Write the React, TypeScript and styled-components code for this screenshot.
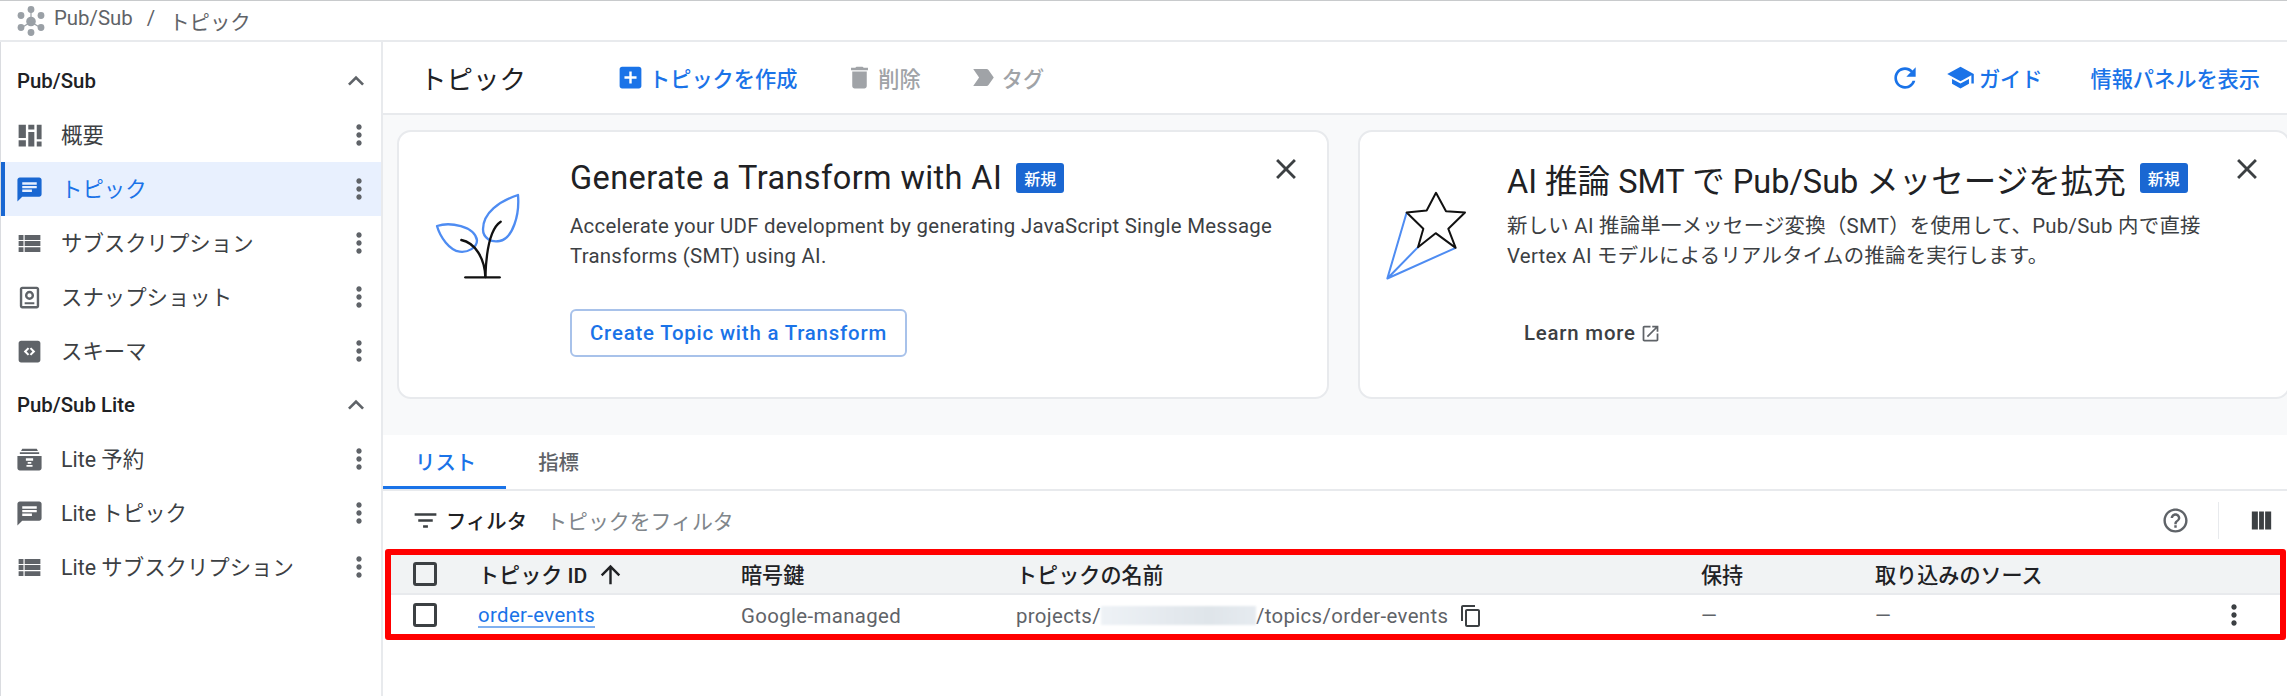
import React from 'react';
import styled, { createGlobalStyle } from 'styled-components';

const GlobalStyle = createGlobalStyle`
    html, body {
        margin: 0;
        padding: 0;
        background: #fff;
        overflow: hidden;
    }
    body, button {
        font-family: Roboto, "Noto Sans CJK JP", sans-serif;
    }
`;

const ICONS: Record<string, string> = {
    chat: 'M20 2H4c-1.1 0-1.99.9-1.99 2L2 22l4-4h14c1.1 0 2-.9 2-2V4c0-1.1-.9-2-2-2zM6 9h12v2H6V9zm8 5H6v-2h8v2zm4-6H6V6h12v2z',
    list: 'M3 14h4v-4H3v4zm0 5h4v-4H3v4zM3 9h4V5H3v4zm5 5h13v-4H8v4zm0 5h13v-4H8v4zM8 5v4h13V5H8z',
    filter: 'M10 18h4v-2h-4v2zM3 6v2h18V6H3zm3 7h12v-2H6v2z',
    addBox: 'M19 3H5c-1.11 0-2 .9-2 2v14c0 1.1.89 2 2 2h14c1.1 0 2-.9 2-2V5c0-1.1-.9-2-2-2zm-2 10h-4v4h-2v-4H7v-2h4V7h2v4h4v2z',
    trash: 'M6 19c0 1.1.9 2 2 2h8c1.1 0 2-.9 2-2V7H6v12zM19 4h-3.5l-1-1h-5l-1 1H5v2h14V4z',
    label: 'M3.5 18.99l11 .01c.67 0 1.27-.33 1.63-.84L20.5 12l-4.37-6.16c-.36-.51-.96-.84-1.63-.84l-11 .01L8.34 12 3.5 18.99z',
    refresh: 'M17.65 6.35C16.2 4.9 14.21 4 12 4c-4.42 0-7.99 3.58-7.99 8s3.57 8 7.99 8c3.73 0 6.84-2.55 7.73-6h-2.08c-.82 2.33-3.04 4-5.65 4-3.31 0-6-2.69-6-6s2.69-6 6-6c1.66 0 3.14.69 4.22 1.78L13 11h7V4l-2.35 2.35z',
    school: 'M5 13.18v4L12 21l7-3.82v-4L12 17l-7-3.82zM12 3L1 9l11 6 9-4.91V17h2V9L12 3z',
    close: 'M19 6.41L17.59 5 12 10.59 6.41 5 5 6.41 10.59 12 5 17.59 6.41 19 12 13.41 17.59 19 19 17.59 13.41 12z',
    more: 'M12 8c1.1 0 2-.9 2-2s-.9-2-2-2-2 .9-2 2 .9 2 2 2zm0 2c-1.1 0-2 .9-2 2s.9 2 2 2 2-.9 2-2-.9-2-2-2zm0 6c-1.1 0-2 .9-2 2s.9 2 2 2 2-.9 2-2-.9-2-2-2z',
    expand: 'M12 8l-6 6 1.41 1.41L12 10.83l4.59 4.58L18 14z',
    help: 'M11 18h2v-2h-2v2zm1-16C6.48 2 2 6.48 2 12s4.48 10 10 10 10-4.48 10-10S17.52 2 12 2zm0 18c-4.41 0-8-3.59-8-8s3.59-8 8-8 8 3.59 8 8-3.59 8-8 8zm0-14c-2.21 0-4 1.79-4 4h2c0-1.1.9-2 2-2s2 .9 2 2c0 2-3 1.75-3 5h2c0-2.25 3-2.5 3-5 0-2.21-1.79-4-4-4z',
    columns: 'M10 19.500h4v-15h-4v15zm-6 0h5v-15H4v15zm11-15v15h5v-15h-5z',
    up: 'M4 12l1.41 1.41L11 7.83V20h2V7.83l5.58 5.59L20 12l-8-8-8 8z',
    copy: 'M16 1H4c-1.1 0-2 .9-2 2v14h2V3h12V1zm3 4H8c-1.1 0-2 .9-2 2v14c0 1.1.9 2 2 2h11c1.1 0 2-.9 2-2V7c0-1.1-.9-2-2-2zm0 16H8V7h11v14z',
    external: 'M19 19H5V5h7V3H5c-1.11 0-2 .9-2 2v14c0 1.1.89 2 2 2h14c1.1 0 2-.9 2-2v-7h-2v7zM14 3v2h3.59l-9.83 9.83 1.41 1.41L19 6.41V10h2V3h-7z',
    overview: 'M3 3h6v11H3V3zm0 13h6v5H3v-5zm8-13h5v4h-5V3zm0 6h5v12h-5V9zm7-6h4v12h-4V3zm0 14h4v4h-4v-4z',
    snapshot: 'M6 3h12c1.1 0 2 .9 2 2v14c0 1.1-.9 2-2 2H6c-1.1 0-2-.9-2-2V5c0-1.1.9-2 2-2zm0 2v14h12V5H6zm2 11h8v1.5H8V16zm4-9.500a3.75 3.75 0 1 1 0 7.5 3.75 3.75 0 0 1 0-7.5zm0 2a1.75 1.75 0 1 0 0 3.5 1.75 1.75 0 0 0 0-3.5z',
    schema: 'M5 3h14c1.1 0 2 .9 2 2v14c0 1.1-.9 2-2 2H5c-1.1 0-2-.9-2-2V5c0-1.1.9-2 2-2zm5.6 5.6L7.2 12l3.4 3.4 1.2-1.2L9.6 12l2.2-2.2-1.2-1.2zm2.8 0l-1.2 1.2 2.2 2.2-2.2 2.2 1.2 1.2 3.4-3.4-3.4-3.4z',
    reservation: 'M6 3h12l1 2H5l1-2zM4 6h16v1.5H4V6zM2 9h20v10c0 1.1-.9 2-2 2H4c-1.1 0-2-.9-2-2V9zm7 2v2h6v-2H9zm1.500 3v1.5h3V14h-3zm-1 2.500V18h5v-1.500h-5z',
};

const Svg = styled.svg<{ $size: number; $color?: string }>`
    display: block;
    flex: none;
    width: ${p => p.$size}px;
    height: ${p => p.$size}px;
    fill: ${p => p.$color || '#5f6368'};
`;

const Icon: React.FC<{ name: string; size: number; color?: string }> = ({ name, size, color }) => (
    <Svg viewBox="0 0 24 24" $size={size} $color={color}>
        <path d={ICONS[name]} />
    </Svg>
);

const Page = styled.div`
    width: 2287px;
    height: 696px;
    display: flex;
    flex-direction: column;
    overflow: hidden;
    font-size: 20.4px;
    color: #3c4043;
`;

const TopBar = styled.div`
    height: 39px;
    flex: none;
    display: flex;
    align-items: center;
    gap: 9px;
    padding: 0 0 0 17px;
    border-top: 1px solid #c8cacc;
    border-bottom: 2px solid #e8eaed;
    color: #5f6368;
    font-size: 20.4px;
`;

const Crumbs = styled.div`
    display: flex;
    gap: 14px;
`;

const Body = styled.div`
    flex: 1;
    min-height: 0;
    display: flex;
`;

const Sidebar = styled.nav`
    width: 380px;
    flex: none;
    padding-top: 12px;
    border-left: 1px solid #dadce0;
    border-right: 2px solid #e8eaed;
`;

const SectionHead = styled.div`
    height: 54px;
    display: flex;
    align-items: center;
    justify-content: space-between;
    padding: 0 9px 0 16px;
    font-weight: 500;
    color: #202124;
`;

const NavRow = styled.div<{ $active?: boolean }>`
    height: 54px;
    display: flex;
    align-items: center;
    gap: 17px;
    padding: 0 6px 0 14px;
    font-size: 21.4px;
    color: ${p => (p.$active ? '#1a73e8' : '#3c4043')};
    background: ${p => (p.$active ? '#e8f0fe' : 'transparent')};
    box-shadow: ${p => (p.$active ? 'inset 4px 0 0 #1967d2' : 'none')};
`;

const NavLabel = styled.span`
    flex: 1;
    padding-bottom: 3px;
`;

const Main = styled.main`
    flex: 1;
    min-width: 0;
    display: flex;
    flex-direction: column;
`;

const PageHeader = styled.header`
    height: 71px;
    flex: none;
    display: flex;
    align-items: center;
    padding: 0 27px 0 37px;
    border-bottom: 2px solid #e8eaed;
`;

const PageTitle = styled.h1`
    margin: 0 90px 0 0;
    font-size: 26.5px;
    font-weight: 400;
    color: #202124;
`;

const ActionGroup = styled.div`
    display: flex;
    align-items: center;
    gap: 48px;
`;

const RightActions = styled(ActionGroup)`
    margin-left: auto;
`;

const RefreshSlot = styled.span`
    margin-right: -23px;
`;

const Action = styled.span<{ $disabled?: boolean }>`
    display: flex;
    align-items: center;
    gap: 4px;
    font-size: 21.2px;
    font-weight: 500;
    color: ${p => (p.$disabled ? '#a0a3a7' : '#1a73e8')};
`;

const Banners = styled.section`
    height: 320px;
    flex: none;
    box-sizing: border-box;
    padding: 15px 0 0 14px;
    display: grid;
    grid-template-columns: 932px 932px;
    column-gap: 29px;
    align-items: start;
    background: #f8f9fa;
`;

const Card = styled.article<{ $iconWidth: number }>`
    position: relative;
    height: 269px;
    box-sizing: border-box;
    display: grid;
    grid-template-columns: ${p => p.$iconWidth}px 1fr;
    border: 2px solid #e8eaed;
    border-radius: 14px;
    background: #fff;
`;

const Art = styled.div<{ $left: number; $top: number }>`
    padding: ${p => p.$top}px 0 0 ${p => p.$left}px;
`;

const CardBody = styled.div`
    padding-top: 28px;
`;

const CardTitle = styled.div<{ $tracking?: number }>`
    display: flex;
    align-items: center;
    gap: 14px;
    height: 36px;
    font-size: 32.5px;
    letter-spacing: ${p => p.$tracking || 0}px;
    color: #202124;
`;

const NewBadge = styled.span`
    width: 48px;
    height: 30px;
    display: flex;
    align-items: center;
    justify-content: center;
    border-radius: 3px;
    background: #1a67d2;
    color: #fff;
    font-size: 16px;
    font-weight: 500;
    letter-spacing: 0;
`;

const CardText = styled.p`
    margin: 15px 0 0;
    font-size: 20.4px;
    letter-spacing: 0.27px;
    line-height: 30px;
    color: #3c4043;
`;

const CloseButton = styled.span`
    position: absolute;
    top: 20px;
    right: 24px;
`;

const OutlineButton = styled.span`
    display: inline-flex;
    align-items: center;
    box-sizing: border-box;
    height: 48px;
    margin-top: 38px;
    padding: 0 18px;
    border: 2px solid #a8c2ea;
    border-radius: 6px;
    color: #1a73e8;
    font-weight: 500;
    letter-spacing: 0.8px;
`;

const LearnMore = styled.span`
    display: inline-flex;
    align-items: center;
    gap: 4px;
    height: 48px;
    margin-top: 38px;
    padding-left: 17px;
    font-weight: 500;
    letter-spacing: 0.8px;
    color: #3c4043;
`;

const Tabs = styled.div`
    height: 56px;
    flex: none;
    box-sizing: border-box;
    display: flex;
    border-bottom: 2px solid #e8eaed;
`;

const Tab = styled.div<{ $active?: boolean }>`
    height: 54px;
    box-sizing: border-box;
    display: flex;
    align-items: center;
    padding: 0 30px 0 32px;
    font-weight: 500;
    color: ${p => (p.$active ? '#1a73e8' : '#5f6368')};
    border-bottom: 3px solid ${p => (p.$active ? '#1a73e8' : 'transparent')};
`;

const FilterBar = styled.div`
    height: 58px;
    flex: none;
    display: flex;
    align-items: center;
    padding: 0 11px 0 28px;
`;

const FilterLabel = styled.span`
    margin: 0 19px 0 6px;
    font-weight: 500;
    color: #202124;
`;

const FilterHint = styled.span`
    font-size: 20.9px;
    color: #80868b;
`;

const FilterTools = styled.div`
    margin-left: auto;
    display: flex;
    align-items: center;
`;

const ToolDivider = styled.span`
    width: 1px;
    height: 37px;
    margin: 0 28px;
    background: #e8eaed;
`;

const Highlight = styled.div`
    margin-left: 2px;
    width: 1901px;
    box-sizing: border-box;
    border: 6px solid #ff0000;
    border-radius: 3px;
`;

const Row = styled.div<{ $head?: boolean }>`
    display: grid;
    grid-template-columns: 87px 263px 275px 685px 174px 1fr 62px;
    align-items: center;
    height: ${p => (p.$head ? '40px' : '39px')};
    box-sizing: border-box;
    font-size: ${p => (p.$head ? '21.1px' : '20.4px')};
    letter-spacing: ${p => (p.$head ? '0' : '0.35px')};
    color: ${p => (p.$head ? '#202124' : '#5f6368')};
    font-weight: ${p => (p.$head ? 500 : 400)};
    background: ${p => (p.$head ? '#f1f3f4' : '#fff')};
    border-bottom: ${p => (p.$head ? '2px solid #e8eaed' : 'none')};
`;

const Cell = styled.div`
    display: flex;
    align-items: center;
    white-space: nowrap;
`;

const DataCell = styled(Cell)`
    padding-top: 2px;
`;

const CheckCell = styled(Cell)`
    padding-left: 22px;
`;

const SortArrow = styled.span`
    margin-left: 9px;
`;

const Checkbox = styled.span`
    display: block;
    width: 24px;
    height: 24px;
    box-sizing: border-box;
    border: 3px solid #3c4043;
    border-radius: 3px;
`;

const TopicLink = styled.a`
    color: #1a73e8;
    border-bottom: 2px solid #7fb0f0;
    line-height: 22px;
`;

const Redacted = styled.span`
    display: inline-block;
    width: 155px;
    height: 19px;
    background: linear-gradient(90deg, #eef2f6, #e4e9ee 45%, #dfe5ea 70%, #e6ebf0);
    filter: blur(1px);
`;

const CopyWrap = styled.span`
    margin-left: 11px;
`;

const Plant = () => (
    <svg width="90" height="90" viewBox="100 120 270 270" fill="none" strokeLinecap="round" strokeLinejoin="round">
        <g stroke="#4e8cf2" strokeWidth="7">
            <path d="M112 225C150 212 225 225 232 268C232 290 205 305 180 302C150 298 122 260 112 225Z" />
            <path d="M355 132C300 150 250 185 250 235C250 262 275 275 300 270C340 262 360 190 355 132Z" />
        </g>
        <g stroke="#111" strokeWidth="7">
            <path d="M185 267C225 275 255 320 257 378" />
            <path d="M303 212C275 230 260 290 257 378" />
            <path d="M197 379H300" />
        </g>
    </svg>
);

const ShootingStar = () => (
    <svg width="90" height="97" viewBox="60 80 270 290" fill="none" strokeLinejoin="round">
        <path d="M140 156L82 354L174 260M82 354L287 262" stroke="#4e8cf2" strokeWidth="6" />
        <path d="M228 97L258 152L315 156L265 205L287 262L227 218L174 260L190 205L140 156L200 150Z" stroke="#111" strokeWidth="6" />
    </svg>
);

const PubSubLogo = () => (
    <svg width="28" height="30" viewBox="0 0 28 30" fill="#9aa0a6">
        <circle cx="14" cy="3.500" r="3.400" />
        <circle cx="14" cy="15.500" r="4.800" />
        <circle cx="14" cy="26.500" r="3.400" />
        <circle cx="4" cy="9.500" r="3.400" />
        <circle cx="24" cy="9.500" r="3.400" />
        <circle cx="4" cy="21.500" r="3.400" />
        <circle cx="24" cy="21.500" r="3.400" />
        <path d="M13.4 3.500h1.200v9h-1.200zM5 20.800l8-5 .7 1-8 5zM15 15.800l8 5-.7 1-8-5z" />
    </svg>
);

const MAIN_NAV = [
    { icon: 'overview', label: '概要' },
    { icon: 'chat', label: 'トピック', active: true },
    { icon: 'list', label: 'サブスクリプション' },
    { icon: 'snapshot', label: 'スナップショット' },
    { icon: 'schema', label: 'スキーマ' },
];

const LITE_NAV = [
    { icon: 'reservation', label: 'Lite 予約' },
    { icon: 'chat', label: 'Lite トピック' },
    { icon: 'list', label: 'Lite サブスクリプション' },
];

type NavEntry = { icon: string; label: string; active?: boolean };

const NavList: React.FC<{ items: NavEntry[] }> = ({ items }) => (
    <>
        {items.map(item => (
            <NavRow key={item.label} $active={item.active}>
                <Icon name={item.icon} size={29} color={item.active ? '#1967d2' : '#5f6368'} />
                <NavLabel>{item.label}</NavLabel>
                <Icon name="more" size={32} />
            </NavRow>
        ))}
    </>
);

const App: React.FC = () => (
    <Page>
        <GlobalStyle />
        <TopBar>
            <PubSubLogo />
            <Crumbs>
                <span>Pub/Sub</span>
                <span>/</span>
                <span>トピック</span>
            </Crumbs>
        </TopBar>
        <Body>
            <Sidebar>
                <SectionHead>
                    Pub/Sub
                    <Icon name="expand" size={32} />
                </SectionHead>
                <NavList items={MAIN_NAV} />
                <SectionHead>
                    Pub/Sub Lite
                    <Icon name="expand" size={32} />
                </SectionHead>
                <NavList items={LITE_NAV} />
            </Sidebar>
            <Main>
                <PageHeader>
                    <PageTitle>トピック</PageTitle>
                    <ActionGroup>
                        <Action>
                            <Icon name="addBox" size={29} color="#1a73e8" />
                            トピックを作成
                        </Action>
                        <Action $disabled>
                            <Icon name="trash" size={29} color="#a0a3a7" />
                            削除
                        </Action>
                        <Action $disabled>
                            <Icon name="label" size={29} color="#a0a3a7" />
                            タグ
                        </Action>
                    </ActionGroup>
                    <RightActions>
                        <RefreshSlot>
                            <Icon name="refresh" size={32} color="#1a73e8" />
                        </RefreshSlot>
                        <Action>
                            <Icon name="school" size={29} color="#1a73e8" />
                            ガイド
                        </Action>
                        <Action>情報パネルを表示</Action>
                    </RightActions>
                </PageHeader>
                <Banners>
                    <Card $iconWidth={171}>
                        <Art $left={34} $top={59}>
                            <Plant />
                        </Art>
                        <CardBody>
                            <CardTitle $tracking={0.4}>
                                Generate a Transform with AI
                                <NewBadge>新規</NewBadge>
                            </CardTitle>
                            <CardText>
                                Accelerate your UDF development by generating JavaScript Single Message
                                <br />
                                Transforms (SMT) using AI.
                            </CardText>
                            <OutlineButton>Create Topic with a Transform</OutlineButton>
                        </CardBody>
                        <CloseButton>
                            <Icon name="close" size={34} color="#3c4043" />
                        </CloseButton>
                    </Card>
                    <Card $iconWidth={147}>
                        <Art $left={20} $top={55}>
                            <ShootingStar />
                        </Art>
                        <CardBody>
                            <CardTitle>
                                AI 推論 SMT で Pub/Sub メッセージを拡充
                                <NewBadge>新規</NewBadge>
                            </CardTitle>
                            <CardText>
                                新しい AI 推論単一メッセージ変換（SMT）を使用して、Pub/Sub 内で直接
                                <br />
                                Vertex AI モデルによるリアルタイムの推論を実行します。
                            </CardText>
                            <LearnMore>
                                Learn more
                                <Icon name="external" size={21} color="#5f6368" />
                            </LearnMore>
                        </CardBody>
                        <CloseButton>
                            <Icon name="close" size={34} color="#3c4043" />
                        </CloseButton>
                    </Card>
                </Banners>
                <Tabs>
                    <Tab $active>リスト</Tab>
                    <Tab>指標</Tab>
                </Tabs>
                <FilterBar>
                    <Icon name="filter" size={29} color="#3c4043" />
                    <FilterLabel>フィルタ</FilterLabel>
                    <FilterHint>トピックをフィルタ</FilterHint>
                    <FilterTools>
                        <Icon name="help" size={29} />
                        <ToolDivider />
                        <Icon name="columns" size={29} color="#3c4043" />
                    </FilterTools>
                </FilterBar>
                <Highlight>
                    <Row $head>
                        <CheckCell>
                            <Checkbox />
                        </CheckCell>
                        <Cell>
                            トピック ID
                            <SortArrow>
                                <Icon name="up" size={29} color="#202124" />
                            </SortArrow>
                        </Cell>
                        <Cell>暗号鍵</Cell>
                        <Cell>トピックの名前</Cell>
                        <Cell>保持</Cell>
                        <Cell>取り込みのソース</Cell>
                        <Cell />
                    </Row>
                    <Row>
                        <CheckCell>
                            <Checkbox />
                        </CheckCell>
                        <DataCell>
                            <TopicLink>order-events</TopicLink>
                        </DataCell>
                        <DataCell>Google-managed</DataCell>
                        <DataCell>
                            projects/
                            <Redacted />
                            /topics/order-events
                            <CopyWrap>
                                <Icon name="copy" size={24} color="#3c4043" />
                            </CopyWrap>
                        </DataCell>
                        <DataCell>—</DataCell>
                        <DataCell>—</DataCell>
                        <Cell>
                            <Icon name="more" size={32} color="#3c4043" />
                        </Cell>
                    </Row>
                </Highlight>
            </Main>
        </Body>
    </Page>
);

export default App;
